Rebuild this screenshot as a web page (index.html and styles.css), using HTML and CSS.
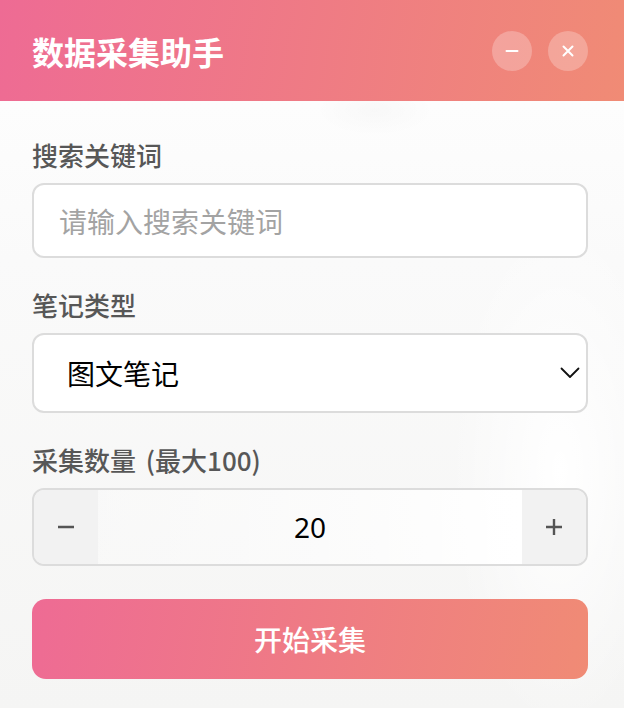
FILE: index.html
```html
<!DOCTYPE html>
<html lang="zh-CN">
<head>
<meta charset="utf-8">
<title>数据采集助手</title>
<link rel="stylesheet" href="styles.css">
</head>
<body>
<div class="app">
  <header class="header">
    <h1 class="title">数据采集助手</h1>
    <div class="win-btns">
      <button class="win-btn" aria-label="最小化">
        <svg width="14" height="14" viewBox="0 0 14 14"><path d="M1.5 7h11" stroke="#fff" stroke-width="2" stroke-linecap="round"/></svg>
      </button>
      <button class="win-btn" aria-label="关闭">
        <svg width="14" height="14" viewBox="0 0 14 14"><path d="M2.5 2.5l9 9M11.5 2.5l-9 9" stroke="#fff" stroke-width="2" stroke-linecap="round"/></svg>
      </button>
    </div>
  </header>
  <main class="main">
    <div class="field">
      <label class="label">搜索关键词</label>
      <input class="text-input" type="text" placeholder="请输入搜索关键词">
    </div>
    <div class="field">
      <label class="label">笔记类型</label>
      <div class="select-box">
        <select class="select">
          <option>图文笔记</option>
          <option>视频笔记</option>
        </select>
        <svg class="chevron" width="20" height="12" viewBox="0 0 20 12"><path d="M1.5 1.5l8.5 8.5 8.5-8.5" fill="none" stroke="#111" stroke-width="1.8" stroke-linecap="round" stroke-linejoin="round"/></svg>
      </div>
    </div>
    <div class="field">
      <label class="label">采集数量 (最大100)</label>
      <div class="stepper">
        <button class="step-btn" aria-label="减少">
          <svg width="18" height="18" viewBox="0 0 18 18"><path d="M1 9h16" stroke="#555" stroke-width="2.4"/></svg>
        </button>
        <input class="step-input" type="text" value="20">
        <button class="step-btn" aria-label="增加">
          <svg width="18" height="18" viewBox="0 0 18 18"><path d="M1 9h16M9 1v16" stroke="#555" stroke-width="2.4"/></svg>
        </button>
      </div>
    </div>
    <button class="start-btn">开始采集</button>
  </main>
</div>
</body>
</html>
```

FILE: styles.css
```css
* { box-sizing: border-box; }

html, body {
  margin: 0;
  padding: 0;
}

body {
  width: 624px;
  height: 708px;
  overflow: hidden;
  font-family: "Noto Sans CJK SC", "Noto Sans", sans-serif;
  background:
    radial-gradient(ellipse 110px 260px at 560px 470px, #ffffff 0%, rgba(255,255,255,0) 100%),
    radial-gradient(ellipse 60px 26px at 375px 110px, rgba(0,0,0,0.02) 0%, rgba(0,0,0,0) 100%),
    linear-gradient(180deg, #ffffff 0px, #fafafa 260px, #f5f5f4 708px);
}

.app {
  height: 708px;
  display: flex;
  flex-direction: column;
}

.header {
  height: 101px;
  flex: none;
  display: flex;
  align-items: center;
  justify-content: space-between;
  padding: 0 36px 0 32px;
  background: linear-gradient(100deg, #ee6b94 0%, #f08b75 100%);
}

.title {
  margin: 0;
  color: #fff;
  font-size: 32px;
  font-weight: 700;
  line-height: 40px;
}

.win-btns {
  display: flex;
  gap: 16px;
}

.win-btn {
  width: 40px;
  height: 40px;
  border: none;
  border-radius: 50%;
  padding: 0;
  background: rgba(255, 255, 255, 0.25);
  display: flex;
  align-items: center;
  justify-content: center;
}

.main {
  padding: 36px 36px 0 32px;
  display: flex;
  flex-direction: column;
}

.field {
  display: flex;
  flex-direction: column;
  margin-bottom: 29px;
}

.label {
  font-size: 26px;
  line-height: 36px;
  font-weight: 500;
  color: #575757;
  margin-bottom: 10px;
  word-spacing: 4px;
}

.text-input {
  height: 75px;
  border: 2px solid #dcdcdc;
  border-radius: 12px;
  background: #fff;
  padding: 0 25px;
  font-family: inherit;
  font-size: 28px;
  color: #222;
  outline: none;
}

.text-input::placeholder {
  color: #a3a3a3;
}

.select-box {
  height: 80px;
  border: 2px solid #dcdcdc;
  border-radius: 12px;
  background: #fff;
  display: flex;
  align-items: center;
  padding-right: 6px;
}

.select {
  flex: 1;
  height: 100%;
  appearance: none;
  -webkit-appearance: none;
  border: none;
  background: transparent;
  padding: 0 0 0 33px;
  font-family: inherit;
  font-size: 28px;
  color: #000;
  outline: none;
}

.chevron {
  flex: none;
}

.stepper {
  height: 78px;
  border: 2px solid #dcdcdc;
  border-radius: 12px;
  overflow: hidden;
  display: flex;
}

.step-btn {
  width: 64px;
  flex: none;
  border: none;
  padding: 0;
  background: #f2f2f2;
  display: flex;
  align-items: center;
  justify-content: center;
}

.step-input {
  flex: 1;
  min-width: 0;
  border: none;
  background: linear-gradient(90deg, rgba(255,255,255,0.2) 0%, rgba(255,255,255,0.6) 60%, #ffffff 100%);
  text-align: center;
  font-family: "Noto Sans", "Noto Sans CJK SC", sans-serif;
  font-size: 28px;
  color: #000;
  outline: none;
}

.start-btn {
  margin-top: 4px;
  height: 80px;
  border: none;
  border-radius: 14px;
  background: linear-gradient(100deg, #ee6b94 0%, #f08b75 100%);
  color: #fff;
  font-family: inherit;
  font-size: 28px;
  font-weight: 500;
}
```
